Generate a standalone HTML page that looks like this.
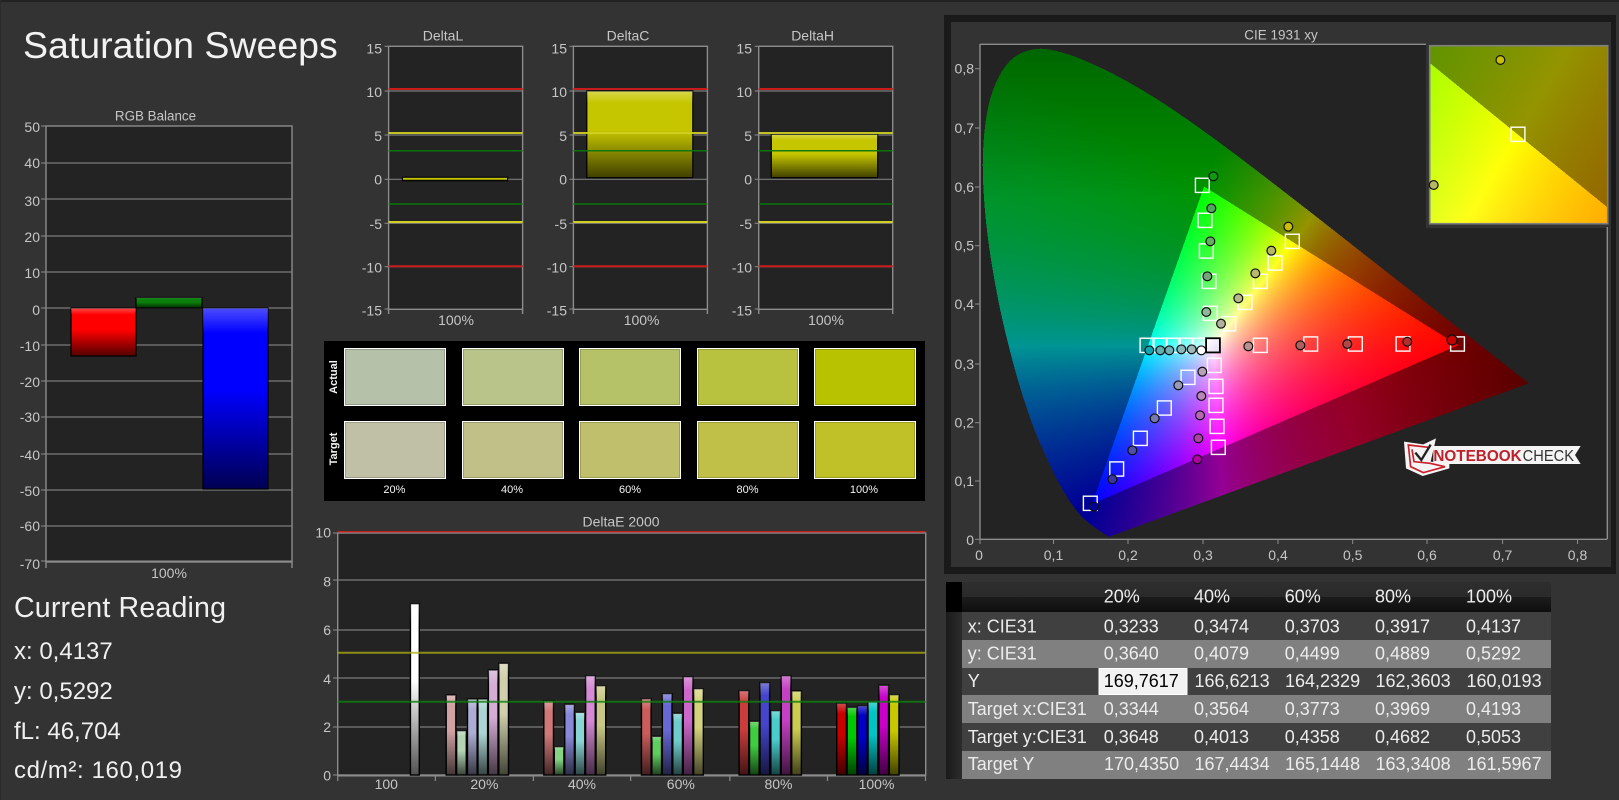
<!DOCTYPE html>
<html><head><meta charset="utf-8"><title>Saturation Sweeps</title>
<style>
html,body{margin:0;padding:0;background:#333;width:1619px;height:800px;overflow:hidden}
div,canvas,svg{position:absolute}
text{font-family:"Liberation Sans",sans-serif;fill:#c6c6c6;font-size:14px}
.e{text-anchor:end}.m{text-anchor:middle}
.w{fill:#f2f2f2}
.t text{font-size:18px;fill:#ececec}
.b{font-weight:bold;font-size:11px;fill:#f4f4f4}
</style></head><body>
<div style="left:0;top:0;width:1619px;height:2px;background:#222"></div>
<div style="left:0;top:0;width:1px;height:800px;background:#2a2a2a"></div>
<div style="left:944px;top:15px;width:672px;height:559px;background:#1a1a1a"></div>
<div style="left:951px;top:22px;width:660px;height:545px;background:#333"></div>
<canvas id="c" width="1260" height="992" style="left:980px;top:44px;width:630px;height:496px"></canvas>
<svg id="s" width="1619" height="800" viewBox="0 0 1619 800" style="left:0;top:0">
<defs>
<linearGradient id="ov" x1="0" y1="0" x2="0" y2="1"><stop offset="0" stop-color="#fff" stop-opacity=".3"/><stop offset=".14" stop-color="#fff" stop-opacity="0"/><stop offset=".45" stop-color="#000" stop-opacity="0"/><stop offset="1" stop-color="#000" stop-opacity=".68"/></linearGradient>
<linearGradient id="wf" x1="0" y1="0" x2="1" y2="1"><stop offset="0" stop-color="#fff"/><stop offset="1" stop-color="#e6dcf2"/></linearGradient>
<linearGradient id="hd" x1="0" y1="0" x2="0" y2="1"><stop offset="0" stop-color="#2e2e2e"/><stop offset=".5" stop-color="#2a2a2a"/><stop offset=".5" stop-color="#1c1c1c"/><stop offset="1" stop-color="#0e0e0e"/></linearGradient>
<linearGradient id="sd" x1="0" y1="0" x2="1" y2="0"><stop offset="0" stop-color="#1a1a1a"/><stop offset="1" stop-color="#2c2c2c"/></linearGradient>
</defs>
<g id="g"></g>

<text x="23" y="58" style="font-size:37.5px;fill:#f2f2f2">Saturation Sweeps</text>
<text x="155.5" y="120.5" class="m" style="font-size:13.4px">RGB Balance</text>
<g class="e">
<text x="40" y="132" class="e">50</text><text x="40" y="168" class="e">40</text><text x="40" y="206" class="e">30</text><text x="40" y="242" class="e">20</text><text x="40" y="278" class="e">10</text><text x="40" y="315" class="e">0</text><text x="40" y="351" class="e">-10</text><text x="40" y="387" class="e">-20</text><text x="40" y="422" class="e">-30</text><text x="40" y="460" class="e">-40</text><text x="40" y="496" class="e">-50</text><text x="40" y="531" class="e">-60</text><text x="40" y="569" class="e">-70</text>
</g>
<text x="169" y="578" class="m">100%</text>
<text x="14" y="617" textLength="212" style="font-size:28.6px;fill:#f0f0f0">Current Reading</text>
<text x="14" y="659" style="font-size:24px;fill:#f0f0f0">x: 0,4137</text>
<text x="14" y="699" style="font-size:24px;fill:#f0f0f0">y: 0,5292</text>
<text x="14" y="739" style="font-size:24px;fill:#f0f0f0">fL: 46,704</text>
<text x="14" y="778" textLength="168" style="font-size:24px;fill:#f0f0f0">cd/m²: 160,019</text>

<text x="443" y="40.7" class="m">DeltaL</text><text x="628" y="40.7" class="m">DeltaC</text><text x="812.6" y="40.7" class="m">DeltaH</text>
<text x="382" y="53.3" class="e">15</text><text x="382" y="97" class="e">10</text><text x="382" y="141" class="e">5</text><text x="382" y="184.5" class="e">0</text><text x="382" y="229" class="e">-5</text><text x="382" y="272.5" class="e">-10</text><text x="382" y="315.7" class="e">-15</text>
<text x="567" y="53.3" class="e">15</text><text x="567" y="97" class="e">10</text><text x="567" y="141" class="e">5</text><text x="567" y="184.5" class="e">0</text><text x="567" y="229" class="e">-5</text><text x="567" y="272.5" class="e">-10</text><text x="567" y="315.7" class="e">-15</text>
<text x="752" y="53.3" class="e">15</text><text x="752" y="97" class="e">10</text><text x="752" y="141" class="e">5</text><text x="752" y="184.5" class="e">0</text><text x="752" y="229" class="e">-5</text><text x="752" y="272.5" class="e">-10</text><text x="752" y="315.7" class="e">-15</text>
<text x="456" y="325" class="m">100%</text><text x="641.6" y="325" class="m">100%</text><text x="826" y="325" class="m">100%</text>

<text class="b m" transform="translate(337 377) rotate(-90)">Actual</text>
<text class="b m" transform="translate(337 449) rotate(-90)">Target</text>
<text class="b m" x="394.4" y="493" style="font-weight:normal">20%</text><text class="b m" x="512" y="493" style="font-weight:normal">40%</text><text class="b m" x="630" y="493" style="font-weight:normal">60%</text><text class="b m" x="747.5" y="493" style="font-weight:normal">80%</text><text class="b m" x="864" y="493" style="font-weight:normal">100%</text>

<text x="621" y="526.7" class="m">DeltaE 2000</text>
<text x="331" y="537.7" class="e">10</text><text x="331" y="586.7" class="e">8</text><text x="331" y="635" class="e">6</text><text x="331" y="684" class="e">4</text><text x="331" y="732" class="e">2</text><text x="331" y="780.7" class="e">0</text>
<text x="386.3" y="789" class="m">100</text><text x="484.4" y="789" class="m">20%</text><text x="582" y="789" class="m">40%</text><text x="680.8" y="789" class="m">60%</text><text x="778.5" y="789" class="m">80%</text><text x="876.5" y="789" class="m">100%</text>

<text x="1281" y="39.3" class="m" style="font-size:13.5px">CIE 1931 xy</text>
<text x="974" y="73.7" class="e">0,8</text><text x="974" y="133" class="e">0,7</text><text x="974" y="192" class="e">0,6</text><text x="974" y="250.7" class="e">0,5</text><text x="974" y="309" class="e">0,4</text><text x="974" y="369" class="e">0,3</text><text x="974" y="427.7" class="e">0,2</text><text x="974" y="486" class="e">0,1</text><text x="974" y="545" class="e">0</text>
<text x="979" y="560" class="m">0</text><text x="1053.5" y="560" class="m">0,1</text><text x="1128" y="560" class="m">0,2</text><text x="1203" y="560" class="m">0,3</text><text x="1278" y="560" class="m">0,4</text><text x="1352.7" y="560" class="m">0,5</text><text x="1427" y="560" class="m">0,6</text><text x="1502.6" y="560" class="m">0,7</text><text x="1577.5" y="560" class="m">0,8</text>

<g transform="translate(1380 410) scale(.33333)">
<polygon points="72,95 130,103 168,85 152,155 208,162 208,175 128,198 78,175" fill="#f4f4f4"/>
<polygon points="160,108 602,108 585,135 602,162 160,162" fill="#f4f4f4"/>
<path d="M145,112 L85,105 L92,170 L130,188 L195,170 L150,160 L102,155 L96,118" fill="none" stroke="#c8202a" stroke-width="5"/>
<path d="M106,128 L124,150 L152,104" fill="none" stroke="#222" stroke-width="7"/>
<text x="160" y="153" textLength="265" lengthAdjust="spacingAndGlyphs" style="font-size:46px;font-weight:bold;fill:#c0202a">NOTEBOOK</text>
<text x="428" y="153" textLength="154" lengthAdjust="spacingAndGlyphs" style="font-size:46px;fill:#333">CHECK</text>
</g>

<g class="t">
<text x="1103.7" y="602.7">20%</text><text x="1194" y="602.7">40%</text><text x="1284.7" y="602.7">60%</text><text x="1375" y="602.7">80%</text><text x="1466" y="602.7">100%</text>
<text x="967.7" y="632.7">x: CIE31</text><text x="1103.7" y="632.7">0,3233</text><text x="1194" y="632.7">0,3474</text><text x="1284.7" y="632.7">0,3703</text><text x="1375" y="632.7">0,3917</text><text x="1466" y="632.7">0,4137</text>
<text x="967.7" y="659.3">y: CIE31</text><text x="1103.7" y="659.3">0,3640</text><text x="1194" y="659.3">0,4079</text><text x="1284.7" y="659.3">0,4499</text><text x="1375" y="659.3">0,4889</text><text x="1466" y="659.3">0,5292</text>
<text x="967.7" y="687">Y</text><text x="1103.7" y="687" style="fill:#000">169,7617</text><text x="1194.5" y="687">166,6213</text><text x="1285" y="687">164,2329</text><text x="1375.5" y="687">162,3603</text><text x="1466.5" y="687">160,0193</text>
<text x="967.7" y="715">Target x:CIE31</text><text x="1103.7" y="715">0,3344</text><text x="1194" y="715">0,3564</text><text x="1284.7" y="715">0,3773</text><text x="1375" y="715">0,3969</text><text x="1466" y="715">0,4193</text>
<text x="967.7" y="743">Target y:CIE31</text><text x="1103.7" y="743">0,3648</text><text x="1194" y="743">0,4013</text><text x="1284.7" y="743">0,4358</text><text x="1375" y="743">0,4682</text><text x="1466" y="743">0,5053</text>
<text x="967.7" y="770">Target Y</text><text x="1104" y="770">170,4350</text><text x="1194.5" y="770">167,4434</text><text x="1285" y="770">165,1448</text><text x="1375.5" y="770">163,3408</text><text x="1466.5" y="770">161,5967</text>
</g>
</svg>
<script>
(function(){
var g=document.getElementById('g'),NS='http://www.w3.org/2000/svg';
function E(n,a){var e=document.createElementNS(NS,n);for(var k in a)e.setAttribute(k,a[k]);g.appendChild(e);return e}
function R(x,y,w,h,f,s,sw,o){var a={x:x,y:y,width:w,height:h,fill:f||'none'};if(s){a.stroke=s;a['stroke-width']=sw||1}if(o)a.opacity=o;return E('rect',a)}
function L(a,b,c,d,s,w,o){var t={x1:a,y1:b,x2:c,y2:d,stroke:s,'stroke-width':w||1};if(o)t.opacity=o;return E('line',t)}
var G='#7c7c7c',B='#8c8c8c';
function bar(x,y,x2,y2,f,sw){R(x,y,x2-x,y2-y,f,'#000',sw||1.2);R(x,y,x2-x,y2-y,'url(#ov)')}

/* RGB */
R(46,126,246,436,'#232323',B,1.4);
[163,199,236,272,308,345,381,417,454,490,526].forEach(function(y){L(46,y,292,y,G,1.2)});
[126,163,199,236,272,308,345,381,417,454,490,526,561].forEach(function(y){L(41,y,46,y,B,1)});
L(46,561,46,568,B,1.4);L(292,561,292,568,B,1.4);L(46,561.5,292,561.5,B,2);
bar(71,308,136,356,'#ff0000');bar(136,297.5,202,308,'#0a800a');bar(203,308,268,489,'#0000ff');

/* Delta */
[[388.6,0,402.4,177.3,507.6,180.7],[573.4,0,586.8,91,692.8,177.7],[758.7,0,771.3,134.3,877.7,177.7]].forEach(function(d){
 var l=d[0];R(l,46.3,134,263,'#232323',B,1.4);
 [91,135,179.3,223.3,266.7].forEach(function(y){L(l,y,l+134,y,G,1.2)});
 [46.3,91,135,179.3,223.3,266.7,309].forEach(function(y){L(l-4,y,l,y,B,1)});
 L(l,309,l,314,B,1.4);L(l+134,309,l+134,314,B,1.4);
 bar(d[2],d[3],d[4],d[5],'#c6c600');
 L(l,89,l+134,89,'#c81c1c',2);L(l,133,l+134,133,'#d0d020',2,.92);L(l,150.7,l+134,150.7,'#0b780b',1.5,.95);
 L(l,204,l+134,204,'#0b780b',1.5);L(l,222,l+134,222,'#d0d020',2);L(l,266.3,l+134,266.3,'#c81c1c',2);
});

/* swatches */
R(324,341,601,160,'#000');
var xs=[[344,101],[462,101],[579,101],[697,101],[814,101]],
 a=['#b5c2a9','#b8c489','#b6c267','#b8c23e','#b8c200'],t=['#c0c0a6','#c0c088','#c0c06c','#c0c048','#c0c028'];
xs.forEach(function(s,i){[[348,a[i]],[421,t[i]]].forEach(function(r){
 R(s[0]+.5,r[0]+.5,s[1],57,r[1],'#fff',1);
 R(s[0]+1.5,r[0]+1.5,s[1]-2,55,'none','#000',1,.18);
})});

/* DeltaE */
R(337.7,533,588,242,'#232323',B,1.4);
[580,630,678,727].forEach(function(y){L(337.7,y,925.7,y,G,1.2)});
[533,580,630,678,727,775].forEach(function(y){L(333,y,337.7,y,B,1)});
[69,312,556,798,1045,1288,1532].forEach(function(v){var x=310+v/2.489;L(x,775,x,781,B,1.2)});
L(337.7,775.5,925.7,775.5,B,2);
function bx(v){return 310+v/2.489}function by(v){return 510+v/3}
bar(bx(250),by(281),bx(272),775,'#ffffff',1.4);
var grp=[
 [[339,365,392,418,444,470],[555,662,567,567,480,460],['#d0a2a2','#b4d4b4','#acacd4','#acd4d4','#d4acd4','#d0d0ac']],
 [[582,608,634,660,686,712],[572,710,583,607,497,527],['#d07878','#84d484','#8888d8','#8ad4d4','#d48ad4','#c8c884']],
 [[825,851,877,903,929,955],[566,679,551,610,500,536],['#cc5c5c','#60cc60','#6868d4','#70cccc','#cc68cc','#d4d47c']],
 [[1068,1094,1120,1147,1173,1199],[542,634,518,602,497,543],['#cc3c3c','#40cc40','#4444cc','#48cccc','#c440c4','#cccc50']],
 [[1311,1337,1363,1389,1416,1442],[580,592,587,575,526,554],['#c80000','#00c800','#0000c8','#00c4c4','#c800c8','#c8c800']]];
grp.forEach(function(k){k[0].forEach(function(x,i){bar(bx(x),by(k[1][i]),bx(x+24),775,k[2][i],1.4)})});
L(337.7,531.8,925.7,531.8,'#c02020',1.5);
L(337.7,652.7,925.7,652.7,'#b0b014',2,.75);
L(337.7,701.7,925.7,701.7,'#0e800e',2,.8);

/* CIE frame */
L(980,44.3,1426,44.3,B,1.4);L(980,44,980,539.5,B,1.4);L(980,539.3,1607,539.3,B,1.4);L(1607.3,227,1607.3,539.3,B,1.4);
[68.7,128,187,245.7,304,364,422.7,481,539.3].forEach(function(y){L(975,y,980,y,B,1)});
[980,1053.5,1128,1203,1278,1352.7,1427,1502.6,1577.5].forEach(function(x){L(x,539,x,544,B,1)});

function px(v){return 1100+v/3}function py(v){return 170+v/3}
function sq(x,y,f,s,w){R(x-6.9,y-7.1,13.8,14.2,f||'none',s||'#fff',w||1.4)}
function ci(x,y,f,r){E('circle',{cx:x,cy:y,r:r||4.4,fill:f,stroke:'#101010','stroke-width':1.2})}
[[307,46],[315,151],[319,243],[327,334],[331,430],[577,214],[525,279],[481,334],[435,397],[386,461],
 [141,526],[180,526],[220,526],[258,526],[298,526],[481,526],[632,522],[766,522],
 [343,586],[348,649],[348,706],[351,769],[355,832],[264,622],[193,714],[121,805]].forEach(function(p){sq(px(p[0]),py(p[1]))});
sq(1403,344);sq(1457.5,344);sq(1116.7,469);sq(1090.3,503.3);
sq(px(339),py(526),'url(#wf)','#000',1.8);
[[340,19,'#109a10'],[334,115,'#50a860'],[331,214,'#60b060'],[322,319,'#70a878'],[319,426,'#90b898'],
 [565,170,'#c8c000'],[514,242,'#b8b860'],[466,310,'#b8b870'],[415,385,'#b8b888'],[363,461,'#b4b49c'],
 [148,541,'#10a8b0'],[181,541,'#60b0b0'],[208,541,'#70b0b0'],[244,538,'#88b8b8'],[275,538,'#a0b8b8'],[304,541,'#ffffff'],
 [445,529,'#b89090'],[601,526,'#b06060'],[742,522,'#b04848'],
 [307,605,'#b8a0b8'],[304,678,'#b888b8'],[300,736,'#b868b0'],[295,805,'#b040a8'],[292,868,'#b000a0'],
 [235,646,'#9898b8'],[164,745,'#7878b0'],[97,841,'#5050a8']].forEach(function(p){ci(px(p[0]),py(p[1]),p[2])});
ci(1407.3,341.7,'#b03030');ci(1452,340,'#c80000',5);ci(1112.4,479.3,'#3838a0');ci(1094,506.7,'#0000a0');
/* inset overlay */
R(1429.7,45.7,178,178,'none','#808080',1.6);
ci(1500.4,60,'#c8c000');ci(1433.7,185,'#b8b860');
sq(1518,134.3);

/* canvas */
var c=document.getElementById('c'),ctx=c.getContext('2d'),W=c.width,H=c.height,im=ctx.createImageData(W,H),D=im.data;
var P0=[[.1741,.005],[.1714,.0051],[.1644,.0109],[.1566,.0177],[.144,.0297],[.1355,.0399],[.1241,.0578],[.1096,.0868],[.0913,.1327],[.0687,.2007],[.0454,.295],[.0235,.4127],[.0082,.5384],[.0039,.6548],[.0139,.7502],[.0389,.812],[.0743,.8338],[.1142,.8262],[.1547,.8059],[.1929,.7816],[.2296,.7543],[.2658,.7243],[.3016,.6923],[.3373,.6589],[.3731,.6245],[.4087,.5896],[.4441,.5547],[.4788,.5202],[.5125,.4866],[.5448,.4544],[.5752,.4242],[.6029,.3965],[.627,.3725],[.6658,.334],[.6915,.3083],[.7079,.292],[.7347,.2653]];
var P=[],n=P0.length;
for(var q0=0;q0<n-1;q0++){
 var a0=P0[Math.max(q0-1,0)],a1=P0[q0],a2=P0[q0+1],a3=P0[Math.min(q0+2,n-1)];
 for(var s0=0;s0<6;s0++){var u=s0/6,u2=u*u,u3=u2*u;
  P.push([0,1].map(function(d){return .5*(2*a1[d]+(a2[d]-a0[d])*u+(2*a0[d]-5*a1[d]+4*a2[d]-a3[d])*u2+(3*a1[d]-a0[d]-3*a2[d]+a3[d])*u3)}));
 }
}
P.push(P0[n-1]);
var o=[0,0,0];
function col(x,y){
 var z=1-x-y,X=x/y,Z=z/y,
 r=3.2406*X-1.5372-.4986*Z,gg=-.9689*X+1.8758+.0415*Z,b=.0557*X-.204+1.057*Z,
 inn=r>=0&&gg>=0&&b>=0;
 if(r<0)r=0;if(gg<0)gg=0;if(b<0)b=0;
 var m=Math.max(r,gg,b)||1,f=1;
 if(!inn){f=.58;if(y>.58)f-=(y-.58)*.7;if(x>.5)f-=(x-.5);}
 o[0]=r/m*f*255;o[1]=gg/m*f*255;o[2]=b/m*f*255;
}
for(var j=0;j<H;j++){
 var py2=44+(j+.5)/2,yc=(539.3-py2)/588,mn=9,mx=-9;
 for(var q=0;q<P.length;q++){
  var p1=P[q],p2=P[(q+1)%P.length];
  if((p1[1]<=yc)!==(p2[1]<=yc)){var xx=p1[0]+(yc-p1[1])*(p2[0]-p1[0])/(p2[1]-p1[1]);if(xx<mn)mn=xx;if(xx>mx)mx=xx}
 }
 for(var i=0;i<W;i++){
  var px2=980+(i+.5)/2,k=(j*W+i)*4,xc=(px2-980)/747;
  if(px2>=1426&&py2<=228){
   if(px2>=1429.4&&px2<=1608&&py2>=45&&py2<=224){col(.4137+(px2-1500.4)/3032,.5292-(py2-60)/3101)}
   else{o[0]=o[1]=o[2]=51}
  }else if(px2>1607.5||py2>539.3){o[0]=o[1]=o[2]=51}
  else if(mx>mn&&xc>=mn&&xc<=mx){col(xc,yc)}
  else{o[0]=o[1]=o[2]=35}
  D[k]=o[0];D[k+1]=o[1];D[k+2]=o[2];D[k+3]=255;
 }
}
ctx.putImageData(im,0,0);

/* table */
R(946,582,16,30,'#000');R(962,582,589,30,'url(#hd)');
[[612,28,'#404040'],[640,28,'#808080'],[668,27,'#404040'],[695,28,'#808080'],[723,28,'#404040'],[751,28,'#808080']].forEach(function(r){
 R(946,r[0],16,r[1],'url(#sd)');R(962,r[0],589,r[1],r[2]);
});
R(1099,668.5,88,26,'#f2f2f2','#fff',1);
})();
</script>
</body></html>
